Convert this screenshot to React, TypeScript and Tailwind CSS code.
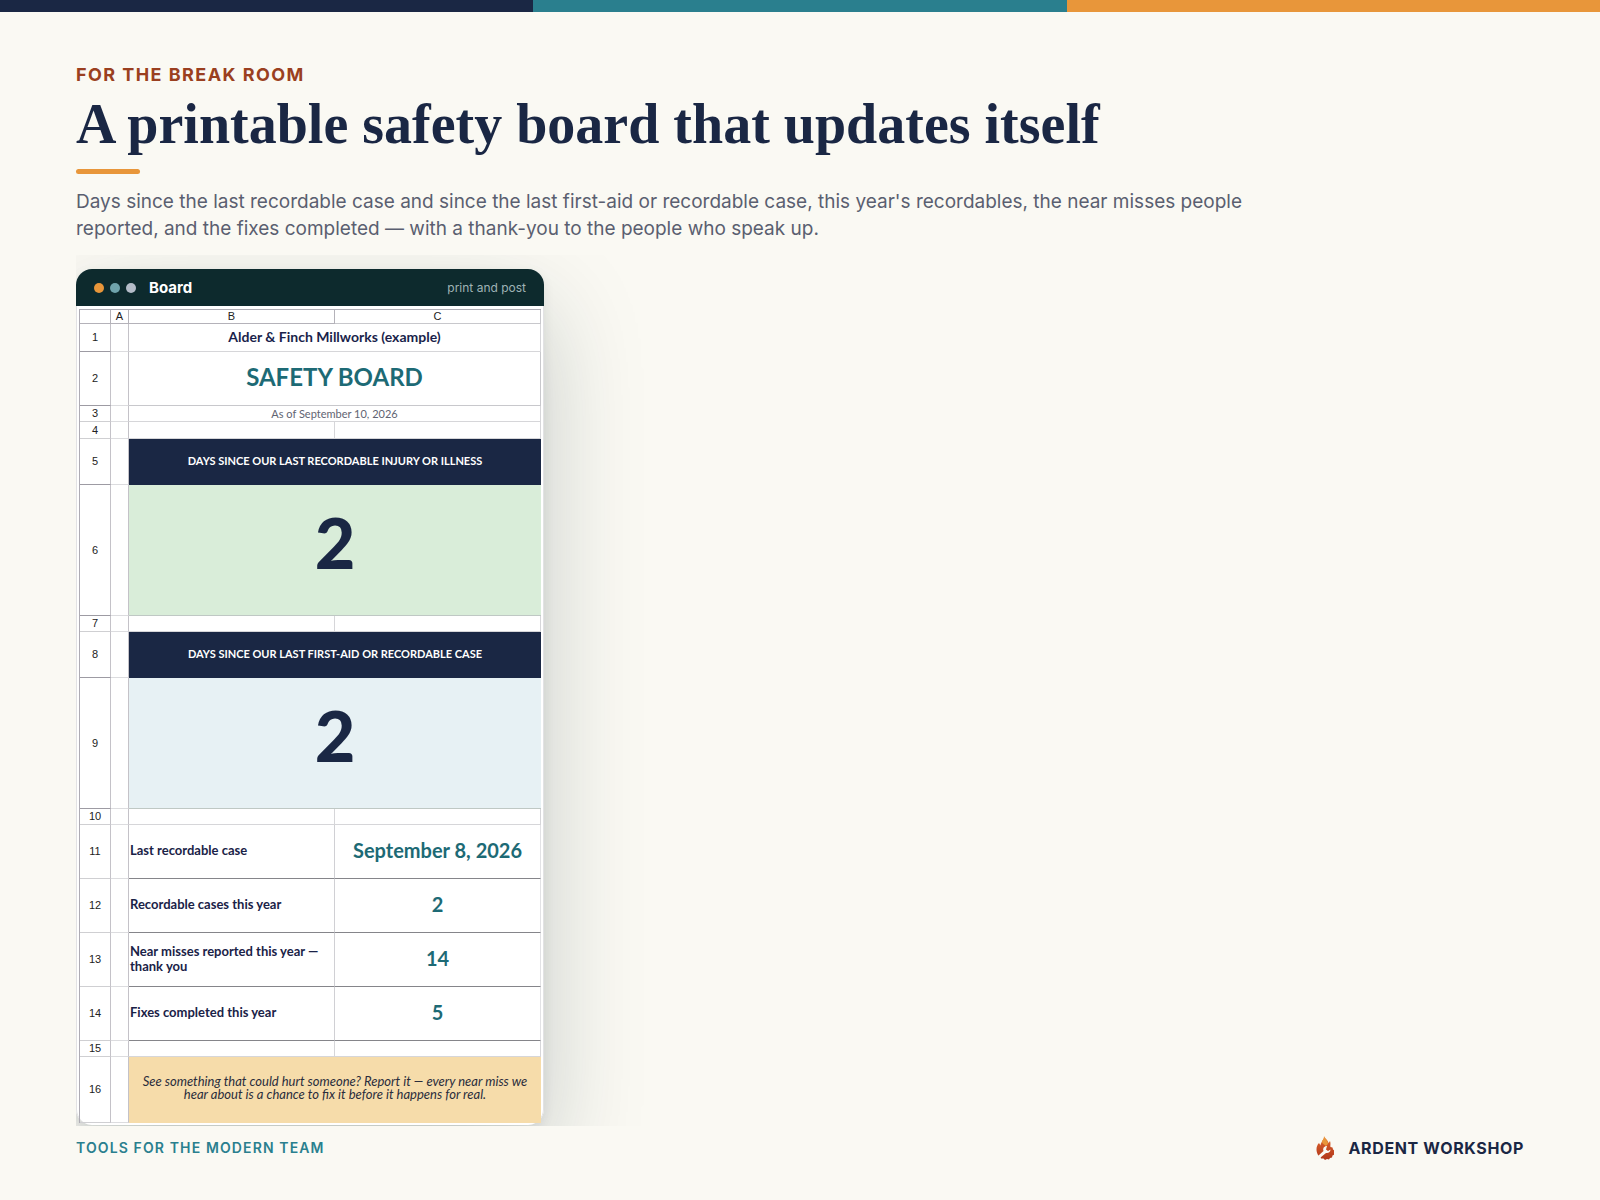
import clsx from 'clsx';

const statRows = [
  { row: 11, label: 'Last recordable case', value: 'September 8, 2026' },
  { row: 12, label: 'Recordable cases this year', value: '2' },
  { row: 13, label: 'Near misses reported this year — thank you', value: '14' },
  { row: 14, label: 'Fixes completed this year', value: '5' },
];

function RowHead({ n, dark }: { n: number; dark?: boolean }) {
  return (
    <>
      <th
        scope="row"
        className={clsx(
          'border-r border-b border-r-[#c4c2c8] p-0 text-center align-middle font-["Liberation_Sans",sans-serif] text-[11px] leading-[13px] font-normal text-[#222]',
          dark ? 'border-b-[#9d9ba3]' : 'border-b-[#cfcfd2]'
        )}
      >
        {n}
      </th>
      <td className="border-r border-b border-r-[#c4c2c8] border-b-[#dcdcdf] p-0" />
    </>
  );
}

function SpacerRow({ n, className }: { n: number; className: string }) {
  return (
    <tr className={className}>
      <RowHead n={n} />
      <td className="border-r border-b border-[#d6d6d9] p-0" />
      <td className="border-r border-b border-[#d6d6d9] p-0" />
    </tr>
  );
}

function Counter({ start, title, days, tint }: { start: number; title: string; days: number; tint: string }) {
  return (
    <>
      <tr className="h-[46px]">
        <RowHead n={start} dark />
        <td colSpan={2} className="bg-[#1a2744] p-0 pb-1 text-center align-middle text-[11px] leading-[15px] font-bold text-white">
          {title}
        </td>
      </tr>
      <tr className="h-[131px]">
        <RowHead n={start + 1} dark />
        <td
          colSpan={2}
          className={clsx('border-b border-[#bfc8c4] p-0 pb-4 text-center align-middle text-[70px] leading-[80px] font-black text-[#1a2744]', tint)}
        >
          {days}
        </td>
      </tr>
    </>
  );
}

function BoardTable() {
  return (
    <table className="w-full table-fixed border-separate border-spacing-0 border-t border-l border-[#aeacb4] font-[Lato,sans-serif]">
      <colgroup>
        <col className="w-[31px]" />
        <col className="w-[18px]" />
        <col />
        <col />
      </colgroup>
      <thead>
        <tr className="h-[14px] font-['Liberation_Sans',sans-serif] text-[11px] leading-[13px] text-[#222]">
          <td className="border-r border-b border-[#b4b2b9] p-0" />
          <th scope="col" className="border-r border-b border-[#b4b2b9] p-0 font-normal">A</th>
          <th scope="col" className="border-r border-b border-[#b4b2b9] p-0 font-normal">B</th>
          <th scope="col" className="border-r border-b border-[#c8c8cc] p-0 font-normal">C</th>
        </tr>
      </thead>
      <tbody>
        <tr className="h-[28px]">
          <RowHead n={1} dark />
          <td colSpan={2} className="border-r border-b border-[#d6d6d9] p-0 pb-0.5 text-center align-middle text-[14px] leading-[17px] font-bold text-[#1a1f4b]">
            Alder &amp; Finch Millworks (example)
          </td>
        </tr>
        <tr className="h-[54px]">
          <RowHead n={2} dark />
          <td colSpan={2} className="border-r border-b border-[#c8c8cc] p-0 pb-1 text-center align-middle text-[24px] leading-[32px] font-bold text-[#1d6a75]">
            SAFETY BOARD
          </td>
        </tr>
        <tr className="h-[16px]">
          <RowHead n={3} />
          <td colSpan={2} className="border-r border-b border-[#d6d6d9] p-0 text-center align-middle text-[11px] leading-[13px] text-[#5f6472]">
            As of September 10, 2026
          </td>
        </tr>
        <SpacerRow n={4} className="h-[17px]" />
        <Counter start={5} title="DAYS SINCE OUR LAST RECORDABLE INJURY OR ILLNESS" days={2} tint="bg-[#d9edd9]" />
        <SpacerRow n={7} className="h-[16px]" />
        <Counter start={8} title="DAYS SINCE OUR LAST FIRST-AID OR RECORDABLE CASE" days={2} tint="bg-[#e7f1f4]" />
        <SpacerRow n={10} className="h-[16px]" />
        {statRows.map((s) => (
          <tr key={s.row} className="h-[54px]">
            <RowHead n={s.row} />
            <td className="border-r border-b border-r-[#d0d0d4] border-b-[#85858a] p-0 pb-0.5 pl-px align-middle text-[13px] leading-[15px] font-bold text-[#1a2247]">
              {s.label}
            </td>
            <td className="border-r border-b border-r-[#e2e2e5] border-b-[#85858a] p-0 pb-1 text-center align-middle text-[20px] leading-[24px] font-bold text-[#1d6a75]">
              {s.value}
            </td>
          </tr>
        ))}
        <SpacerRow n={15} className="h-[16px]" />
        <tr className="h-[66px]">
          <RowHead n={16} />
          <td colSpan={2} className="bg-[#f6dcaa] px-2 pt-0 pb-1 text-center align-middle text-[13px] leading-[13px] text-[#2a2d3c] italic">
            See something that could hurt someone? Report it — every near miss we hear about is a chance to fix it before it happens for real.
          </td>
        </tr>
      </tbody>
    </table>
  );
}

function FlameLogo() {
  return (
    <svg viewBox="0 0 36 48" className="h-6 w-[18px]" aria-hidden="true">
      <defs>
        <linearGradient id="flame" x1="0" y1="0" x2="0" y2="1">
          <stop offset="0" stopColor="#f0a24a" />
          <stop offset="0.35" stopColor="#cf5526" />
          <stop offset="1" stopColor="#b0361a" />
        </linearGradient>
      </defs>
      <path fill="url(#flame)" d="M16 0c2 5 8 8 9 14l3-4c2 5 0 8 1 12l4 1 1 4 3 2-1 4 1 4-4 2-1 4-4 1-2 3-4-1-4 2-3-3-5 0-1-4-4-2c-6-8-5-19 1-25l3 5c1-8 7-11 7-19z" />
      <path fill="#e8963a" d="M17 2c2 6 7 8 7 14l-4 4c-5-3-8-6-8-10 2-3 5-5 5-8z" />
      <path fill="#faf9f3" d="M22 20c-6 0-9 5-7 10L5 39l4 4 11-9c5 1 9-2 9-7l-5 3-4-3z" />
    </svg>
  );
}

export default function App() {
  return (
    <main className="flex min-h-screen flex-col bg-[#faf9f3] font-[Inter,sans-serif]">
      <div className="grid h-3 grid-cols-3">
        <div className="bg-[#1a2744]" />
        <div className="bg-[#2a7f8e]" />
        <div className="bg-[#e8963a]" />
      </div>

      <header className="px-[76px] pt-[49px]">
        <p className="text-[18px] leading-[28px] font-bold tracking-[0.08em] text-[#9a3f20]">FOR THE BREAK ROOM</p>
        <h1 className="mt-[3px] font-['Liberation_Serif',serif] text-[56px] leading-[64px] font-bold text-[#1a2744]">
          A printable safety board that updates itself
        </h1>
        <div className="mt-[13px] h-[5px] w-16 rounded-full bg-[#e8963a]" />
        <p className="mt-[14px] max-w-[1180px] text-[19px] leading-[27px] text-[#5a5f70]">
          Days since the last recordable case and since the last first-aid or recordable case, this year's recordables, the near
          misses people reported, and the fixes completed — with a thank-you to the people who speak up.
        </p>
      </header>

      {/* The wrapper crops the card shadow at the left and bottom edges */}
      <section className="mt-[13px] ml-[76px] overflow-hidden pt-[14px] pb-px">
        <div className="w-[468px] rounded-2xl bg-white shadow-[0_4px_12px_rgba(13,43,46,0.08),0_40px_100px_rgba(13,43,46,0.22)]">
          <div className="flex h-[37px] items-center rounded-t-2xl bg-[#0d2a2d] px-[18px]">
            <div className="flex gap-[6px]">
              <span className="size-[10px] rounded-full bg-[#e8963a]" />
              <span className="size-[10px] rounded-full bg-[#6fa3ab]" />
              <span className="size-[10px] rounded-full bg-[#b4bcc8]" />
            </div>
            <h2 className="ml-[13px] text-[15px] leading-5 font-bold text-white">Board</h2>
            <span className="ml-auto text-[12px] leading-5 text-[#9fb3b5]">print and post</span>
          </div>
          <div className="rounded-b-2xl border-x border-[#e2e2e4] pt-[3px] pr-[2px] pb-[2px] pl-[2px]">
            <BoardTable />
          </div>
        </div>
      </section>

      <footer className="flex items-center justify-between px-[76px] pt-[10px] pb-10">
        <p className="text-[14px] leading-6 font-semibold tracking-[0.08em] text-[#2a7f8e]">TOOLS FOR THE MODERN TEAM</p>
        <div className="flex items-center gap-[14px]">
          <FlameLogo />
          <span className="text-[16px] leading-6 font-bold tracking-[0.04em] text-[#1a2744]">ARDENT WORKSHOP</span>
        </div>
      </footer>
    </main>
  );
}
